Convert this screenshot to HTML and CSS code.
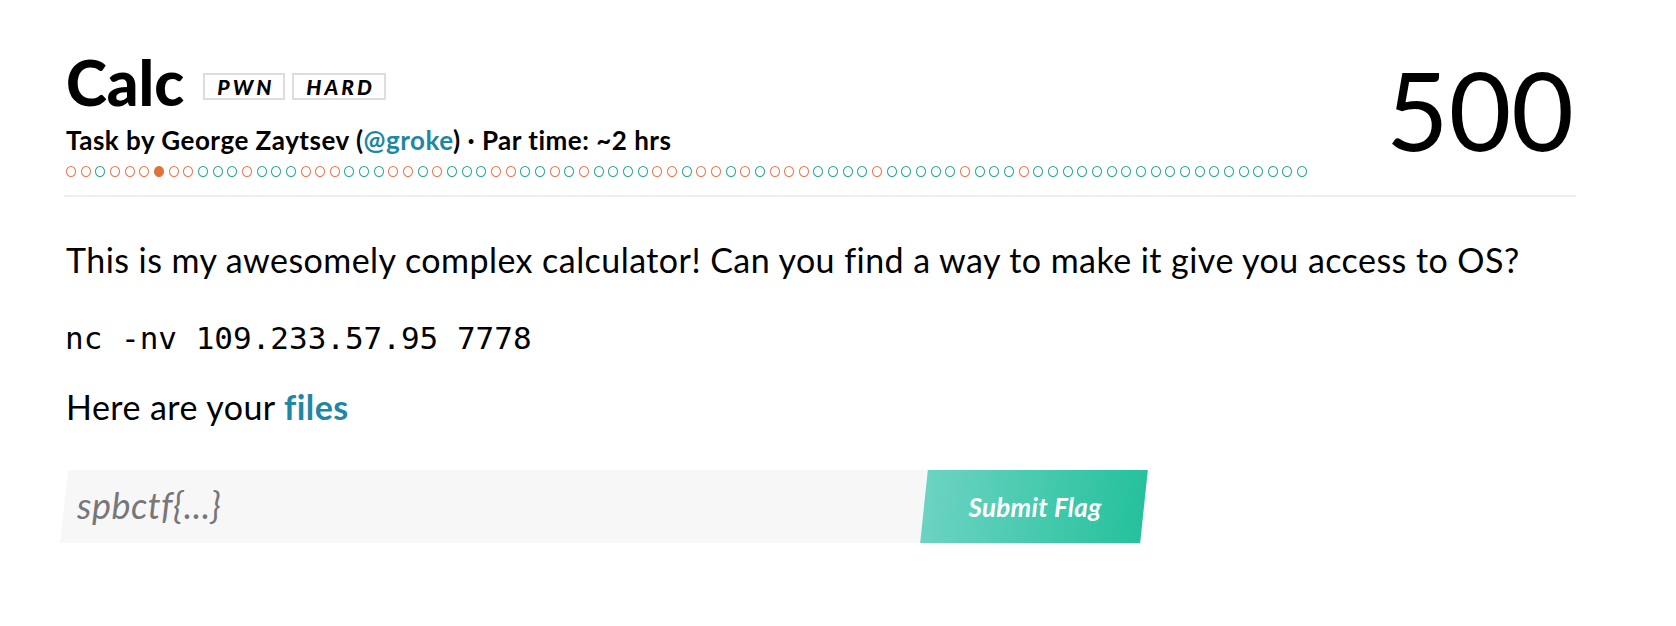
FILE: index.html
```html
<!DOCTYPE html>
<html>
<head>
<meta charset="utf-8">
<link rel="stylesheet" href="styles.css">
</head>
<body>
<div class="page">
  <header class="task-head">
    <div class="head-main">
      <div class="title-row">
        <h1 class="title">Calc</h1>
        <span class="badge">PWN</span>
        <span class="badge">HARD</span>
      </div>
      <div class="subtitle">Task by George Zaytsev (<a class="link" href="#">@groke</a>) · Par time: ~2 hrs</div>
      <div class="dots">
        <span class="dot o"></span><span class="dot o"></span><span class="dot g"></span><span class="dot o"></span><span class="dot o"></span><span class="dot o"></span><span class="dot f"></span><span class="dot o"></span><span class="dot o"></span><span class="dot g"></span>
        <span class="dot g"></span><span class="dot g"></span><span class="dot o"></span><span class="dot g"></span><span class="dot g"></span><span class="dot g"></span><span class="dot o"></span><span class="dot o"></span><span class="dot o"></span><span class="dot g"></span>
        <span class="dot g"></span><span class="dot g"></span><span class="dot o"></span><span class="dot o"></span><span class="dot g"></span><span class="dot o"></span><span class="dot g"></span><span class="dot g"></span><span class="dot g"></span><span class="dot o"></span>
        <span class="dot o"></span><span class="dot g"></span><span class="dot g"></span><span class="dot o"></span><span class="dot g"></span><span class="dot o"></span><span class="dot g"></span><span class="dot g"></span><span class="dot g"></span><span class="dot g"></span>
        <span class="dot o"></span><span class="dot o"></span><span class="dot g"></span><span class="dot o"></span><span class="dot o"></span><span class="dot g"></span><span class="dot o"></span><span class="dot g"></span><span class="dot o"></span><span class="dot o"></span>
        <span class="dot o"></span><span class="dot g"></span><span class="dot g"></span><span class="dot g"></span><span class="dot g"></span><span class="dot o"></span><span class="dot g"></span><span class="dot g"></span><span class="dot g"></span><span class="dot g"></span>
        <span class="dot g"></span><span class="dot o"></span><span class="dot g"></span><span class="dot g"></span><span class="dot g"></span><span class="dot o"></span><span class="dot g"></span><span class="dot g"></span><span class="dot g"></span><span class="dot g"></span>
        <span class="dot g"></span><span class="dot g"></span><span class="dot g"></span><span class="dot g"></span><span class="dot g"></span><span class="dot g"></span><span class="dot g"></span><span class="dot g"></span><span class="dot g"></span><span class="dot g"></span>
        <span class="dot g"></span><span class="dot g"></span><span class="dot g"></span><span class="dot g"></span><span class="dot g"></span>
      </div>
    </div>
    <div class="score">500</div>
  </header>

  <section class="task-body">
    <p class="para">This is my awesomely complex calculator! Can you find a way to make it give you access to OS?</p>
    <p class="code">nc -nv 109.233.57.95 7778</p>
    <p class="para last">Here are your <a class="link strong" href="#">files</a></p>
  </section>

  <form class="flag-form">
    <div class="field"><input class="flag-input" type="text" placeholder="spbctf{...}"></div>
    <button class="submit" type="button"><span class="submit-label">Submit Flag</span></button>
  </form>
</div>
</body>
</html>
```

FILE: styles.css
```css
html, body {
  margin: 0;
  padding: 0;
  background: #ffffff;
}

body {
  font-family: "Lato", "Noto Sans", sans-serif;
  color: #000;
}

.page {
  width: 1512px;
  margin-left: 64px;
  padding-top: 50px;
}

.task-head {
  display: flex;
  justify-content: space-between;
  align-items: flex-start;
  border-bottom: 2px solid #eeeeee;
  padding-bottom: 18px;
}

.head-main {
  display: flex;
  flex-direction: column;
  padding-left: 2px;
}

.title-row {
  display: flex;
  align-items: center;
  height: 64px;
}

.title {
  margin: 0 19px 0 0;
  font-size: 62px;
  line-height: 64px;
  font-weight: 900;
}

.badge {
  display: inline-block;
  box-sizing: border-box;
  height: 27px;
  line-height: 23px;
  padding: 0 9px 0 12px;
  margin-right: 7px;
  margin-top: 8px;
  border: 2px solid #dddddd;
  font-size: 21px;
  font-weight: 900;
  font-style: italic;
  letter-spacing: 3px;
}

.subtitle {
  margin-top: 11px;
  font-size: 26px;
  line-height: 30px;
  font-weight: 700;
  letter-spacing: 0.5px;
}

.link {
  color: #1f87a3;
  text-decoration: none;
}

.strong {
  font-weight: 700;
}

.dots {
  display: flex;
  align-items: center;
  gap: 4.67px;
  margin-top: 11px;
}

.dot {
  box-sizing: border-box;
  width: 10px;
  height: 11px;
  border-radius: 50%;
  border: 1.7px solid #e8734c;
}

.dot.g {
  border-color: #1fa591;
}

.dot.f {
  background: #e0733a;
  border-color: #e0733a;
}

.score {
  font-size: 108px;
  line-height: 108px;
  font-weight: 400;
  margin-top: 5px;
  margin-right: 2px;
}

.task-body {
  padding-top: 41px;
}

.para {
  margin: 0 0 36px 2px;
  font-size: 34px;
  line-height: 44px;
  letter-spacing: 0.45px;
}

.para.last {
  margin-bottom: 0;
}

.code {
  margin: 0 0 27px 1px;
  font-family: "DejaVu Sans Mono", "Liberation Mono", monospace;
  font-size: 31px;
  line-height: 40px;
}

.flag-form {
  display: flex;
  margin-top: 41px;
}

.field {
  position: relative;
  isolation: isolate;
  width: 860px;
  height: 73px;
}

.field::before {
  content: "";
  position: absolute;
  inset: 0;
  background: #f7f7f7;
  transform: skewX(-6deg);
  z-index: -1;
}

.flag-input {
  box-sizing: border-box;
  width: 100%;
  height: 100%;
  border: 0;
  outline: none;
  background: transparent;
  padding: 0 0 4px 13px;
  font-family: "Lato", sans-serif;
  font-style: italic;
  font-size: 36px;
  letter-spacing: 0.5px;
  color: #333;
}

.flag-input::placeholder {
  color: #777777;
}

.submit {
  position: relative;
  isolation: isolate;
  width: 220px;
  height: 73px;
  border: 0;
  padding: 0;
  background: transparent;
  cursor: pointer;
}

.submit::before {
  content: "";
  position: absolute;
  inset: 0;
  background: linear-gradient(90deg, #6cd3c2 0%, #25c19c 100%);
  transform: skewX(-6deg);
  z-index: -1;
}

.submit-label {
  font-family: "Lato", sans-serif;
  font-size: 26px;
  font-weight: 700;
  font-style: italic;
  letter-spacing: 0.3px;
  color: #ffffff;
  margin-left: 2px;
}
```
